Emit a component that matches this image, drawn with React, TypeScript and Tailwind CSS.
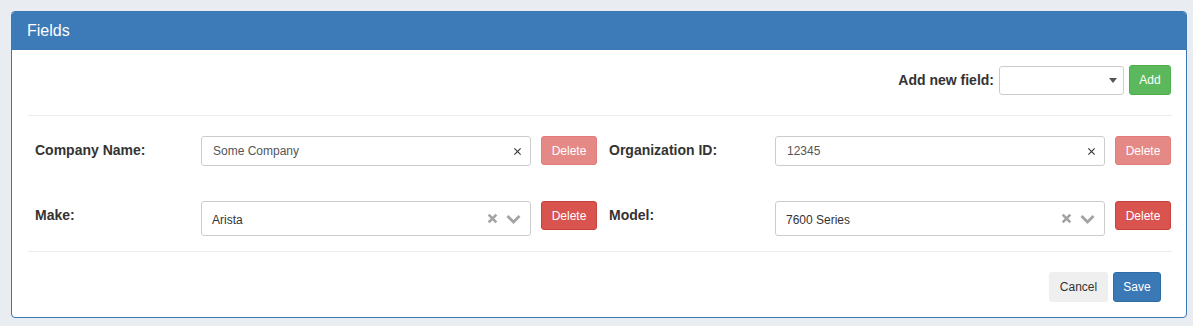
import React from "react";

const ClearX: React.FC<{ className?: string }> = ({ className }) => (
  <svg width="9" height="9" viewBox="0 0 10 10" className={className}>
    <path d="M1.5 1.5 L8.5 8.5 M8.5 1.5 L1.5 8.5" stroke="currentColor" strokeWidth="1.2" />
  </svg>
);

const SelectIcons: React.FC = () => (
  <div className="flex items-center gap-[8px] pr-[9px] text-[#a3a3a3]">
    <svg width="11" height="11" viewBox="0 0 10 10">
      <path d="M1.5 1.5 L8.5 8.5 M8.5 1.5 L1.5 8.5" stroke="currentColor" strokeWidth="2.4" />
    </svg>
    <svg width="15" height="10" viewBox="0 0 15 10">
      <path d="M1.5 2 L7.5 8 L13.5 2" stroke="currentColor" strokeWidth="2.8" fill="none" />
    </svg>
  </div>
);

const DeleteButton: React.FC<{ disabled?: boolean }> = ({ disabled }) => (
  <button
    className={`h-[29px] w-[56px] rounded-[3px] border text-[12px] text-white ${
      disabled
        ? "border-[#e27c79] bg-[#e48986]"
        : "border-[#c9413d] bg-[#d9534f]"
    }`}
  >
    Delete
  </button>
);

const TextField: React.FC<{ value: string }> = ({ value }) => (
  <div className="flex h-[30px] w-[330px] items-center justify-between rounded-[3px] border border-[#ccc] pl-[11px] pr-[8px] text-[12px] text-[#555]">
    <span>{value}</span>
    <ClearX className="text-[#333]" />
  </div>
);

const SelectField: React.FC<{ value: string }> = ({ value }) => (
  <div className="flex h-[35px] w-[330px] items-center justify-between rounded-[3px] border border-[#ccc] pl-[10px] text-[12px] text-[#333]">
    <span className="pt-[2px]">{value}</span>
    <SelectIcons />
  </div>
);

const App: React.FC = () => {
  const rows = [
    [
      { label: "Company Name:", value: "Some Company", kind: "text" },
      { label: "Organization ID:", value: "12345", kind: "text" },
    ],
    [
      { label: "Make:", value: "Arista", kind: "select" },
      { label: "Model:", value: "7600 Series", kind: "select" },
    ],
  ];

  return (
    <div className="min-h-[326px] bg-[#e9ecf0] pl-[11px] pr-[6px] pt-[11px] font-['Liberation_Sans',Arial,sans-serif]">
      <div className="overflow-hidden rounded-[4px] border border-[#3b77b3] bg-white">
        {/* Header */}
        <div className="flex h-[38px] items-center bg-[#3d7ab8] px-[15px] text-[16px] text-white">
          Fields
        </div>

        {/* Body */}
        <div className="pl-[16px] pr-[14px] pt-[15px] pb-[15px]">
          <div className="flex items-center justify-end gap-[5px] pb-[20px] pr-[1px]">
            <span className="text-[14px] font-bold text-[#333]">Add new field:</span>
            <div className="flex h-[29px] w-[125px] items-center justify-end rounded-[3px] border border-[#ccc] pr-[6px]">
              <svg width="8" height="5" viewBox="0 0 8 5">
                <path d="M0 0 L8 0 L4 5 Z" fill="#555" />
              </svg>
            </div>
            <button className="h-[30px] w-[42px] rounded-[3px] border border-[#4cae4c] bg-[#5cb85c] text-[12px] text-white">
              Add
            </button>
          </div>

          <div className="border-t border-[#eee]" />

          <div className="flex flex-col gap-[35px] pt-[20px] pb-[15px] pl-[7px]">
            {rows.map((row, i) => (
              <div key={i} className="flex items-start gap-[12px]">
                {row.map((f) => (
                  <div key={f.label} className="flex items-start">
                    <div className="w-[166px] text-[14px] leading-[29px] font-bold text-[#333]">
                      {f.label}
                    </div>
                    {f.kind === "text" ? (
                      <TextField value={f.value} />
                    ) : (
                      <SelectField value={f.value} />
                    )}
                    <div className="ml-[10px]">
                      <DeleteButton disabled={f.kind === "text"} />
                    </div>
                  </div>
                ))}
              </div>
            ))}
          </div>

          <div className="border-t border-[#eee]" />

          <div className="flex justify-end gap-[5px] pt-[20px] pr-[11px]">
            <button className="h-[30px] w-[59px] rounded-[3px] bg-[#efefef] text-[12px] text-[#333]">
              Cancel
            </button>
            <button className="h-[30px] w-[48px] rounded-[3px] border border-[#2e6da4] bg-[#3a79b6] text-[12px] text-white">
              Save
            </button>
          </div>
        </div>
      </div>
    </div>
  );
};

export default App;
